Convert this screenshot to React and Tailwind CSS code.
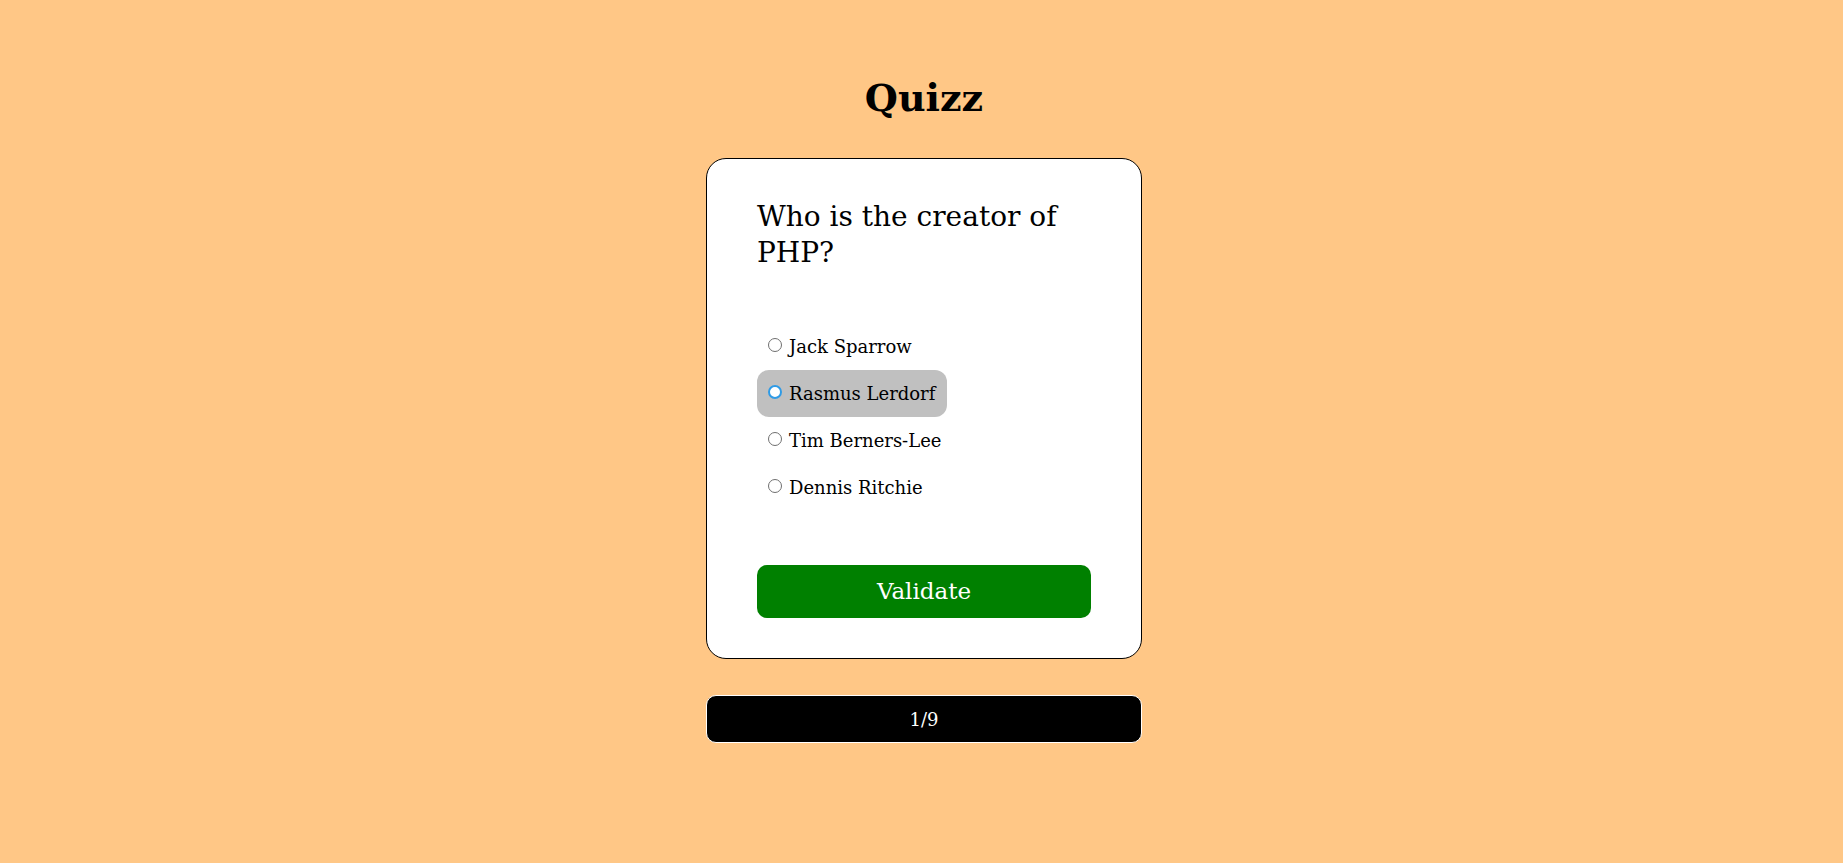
import React, { useState } from 'react'

const answers = ['Jack Sparrow', 'Rasmus Lerdorf', 'Tim Berners-Lee', 'Dennis Ritchie']

export default function App() {
  const [hovered, setHovered] = useState(1)
  const [picked, setPicked] = useState(null)

  return (
    <div className="min-h-screen bg-[#ffc786] pl-[5px] pt-[75px] font-['Georgia','DejaVu_Serif',serif] text-black">
      <div className="flex flex-col items-center">
        <h1 className="mb-[37px] text-[38px] font-bold leading-[46px]">Quizz</h1>

        <div className="w-[436px] rounded-[20px] border border-black bg-white px-[50px] pt-[40px] pb-[40px]">
          <h2 className="text-[28px] font-normal leading-[36px]">Who is the creator of PHP?</h2>

          <div className="mt-[52px] flex flex-col items-start">
            {answers.map((a, i) => (
              <label
                key={a}
                onMouseEnter={() => setHovered(i)}
                className={
                  'flex h-[47px] cursor-pointer items-center rounded-xl pl-[11px] pr-[12px] text-[18px] ' +
                  (hovered === i ? 'bg-[#c0c0c0]' : '')
                }
              >
                <input
                  type="radio"
                  name="answer"
                  checked={picked === i}
                  onChange={() => setPicked(i)}
                  className={
                    'mr-[7px] mb-[4px] h-[14px] w-[14px] shrink-0 appearance-none rounded-full bg-white ' +
                    (hovered === i ? 'border-2 border-[#2f9be6]' : 'border border-[#6f6f6f]')
                  }
                />
                {a}
              </label>
            ))}
          </div>

          <button className="mt-[54px] h-[53px] w-full rounded-[10px] bg-[#008000] text-[23px] text-white">
            Validate
          </button>
        </div>

        <div className="mt-[36px] flex h-[48px] w-[436px] items-center justify-center rounded-[10px] border border-white bg-black text-[18px] text-white">
          1/9
        </div>
      </div>
    </div>
  )
}
